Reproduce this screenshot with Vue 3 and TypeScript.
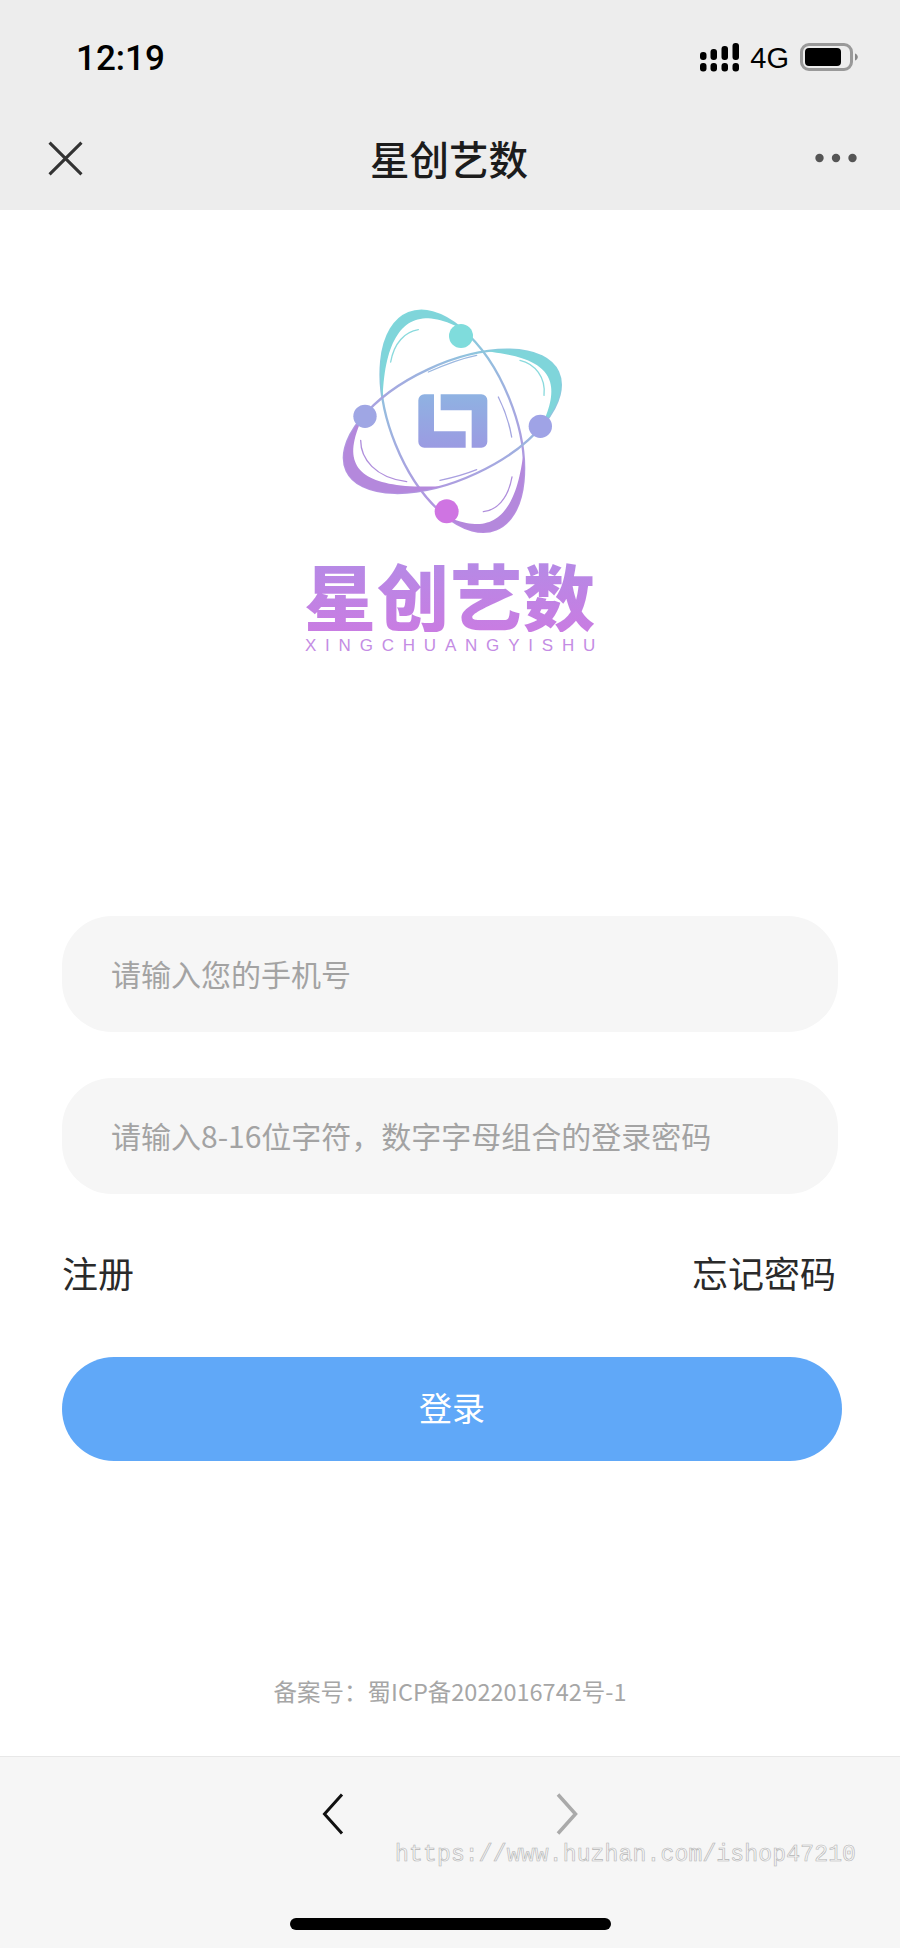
<script setup lang="ts">
const signalBars = [
  { x: 698, y: 52, h: 8 },
  { x: 708.5, y: 49, h: 11 },
  { x: 719.5, y: 46, h: 14 },
  { x: 730.5, y: 43, h: 17 },
];

// tapered band along an orbit, outer edge on the ellipse, angles in degrees
function crescent(rx: number, ry: number, from: number, to: number, thick: number) {
  const outer: string[] = [];
  const inner: string[] = [];
  const steps = 40;
  for (let i = 0; i <= steps; i++) {
    const p = i / steps;
    const t = ((from + (to - from) * p) * Math.PI) / 180;
    const d = thick * Math.pow(Math.sin(Math.PI * p), 0.8);
    outer.push(`${(rx * Math.cos(t)).toFixed(1)} ${(ry * Math.sin(t)).toFixed(1)}`);
    inner.unshift(`${((rx - d) * Math.cos(t)).toFixed(1)} ${((ry - d) * Math.sin(t)).toFixed(1)}`);
  }
  return `M${outer.join('L')}L${inner.join('L')}Z`;
}

const tealTop = crescent(184, 350, -45, -155, 28);
const purpleBottom = crescent(184, 350, 132, 30, 30);
const tealRight = crescent(350, 172, -58, 47, 34);
const purpleLeft = crescent(350, 172, 227, 109, 36);
</script>

<template>
  <div class="page">
    <header class="top">
      <div class="status">
        <span class="time">12:19</span>
        <div class="status-right">
          <svg class="signal" width="40" height="29" viewBox="697 43 40 29">
            <g v-for="b in signalBars" :key="b.x">
              <rect :x="b.x" :y="b.y" width="6.5" :height="b.h" rx="3" fill="#000" />
              <rect :x="b.x" y="63" width="6.5" height="8.5" rx="3" fill="#000" />
            </g>
          </svg>
          <span class="net">4G</span>
          <svg class="battery" width="58" height="28" viewBox="0 0 58 28">
            <rect x="1.5" y="1.5" width="50" height="25" rx="7.5" fill="none" stroke="#999" stroke-width="3" />
            <rect x="5" y="5" width="36" height="18" rx="4" fill="#000" />
            <path d="M55 10.5c1.8 .6 2.8 2 2.8 3.500s-1 2.900-2.800 3.500z" fill="#888" />
          </svg>
        </div>
      </div>
      <div class="nav">
        <svg class="close" width="35" height="35" viewBox="0 0 34 34">
          <path d="M1.500 1.500L32.500 32.500M32.500 1.500L1.500 32.500" stroke="#333" stroke-width="3" fill="none" />
        </svg>
        <span class="title">星创艺数</span>
        <svg class="more" width="42" height="10" viewBox="0 0 42 10">
          <circle cx="4.500" cy="5" r="4.200" fill="#555" />
          <circle cx="21" cy="5" r="4.200" fill="#555" />
          <circle cx="37.500" cy="5" r="4.200" fill="#555" />
        </svg>
      </div>
    </header>

    <main class="main">
      <div class="logo">
        <svg class="atom" width="320" height="254" viewBox="0 0 960 760">
          <defs>
            <linearGradient id="orbitA" gradientUnits="userSpaceOnUse" x1="0" y1="60" x2="0" y2="700">
              <stop offset="0" stop-color="#7fd8dc" />
              <stop offset="0.55" stop-color="#a3abe0" />
              <stop offset="1" stop-color="#b88ce0" />
            </linearGradient>
            <linearGradient id="orbitB" gradientUnits="userSpaceOnUse" x1="800" y1="200" x2="170" y2="580">
              <stop offset="0" stop-color="#7fd8dc" />
              <stop offset="0.5" stop-color="#a3abe0" />
              <stop offset="1" stop-color="#b88ce0" />
            </linearGradient>
            <linearGradient id="mark" x1="0" y1="0" x2="0" y2="1">
              <stop offset="0" stop-color="#8fb2e2" />
              <stop offset="1" stop-color="#9b9be2" />
            </linearGradient>
          </defs>
          <ellipse cx="487" cy="393" rx="184" ry="350" transform="rotate(-22 487 393)" fill="none" stroke="url(#orbitA)" stroke-width="7" />
          <ellipse cx="487" cy="393" rx="350" ry="172" transform="rotate(-25 487 393)" fill="none" stroke="url(#orbitB)" stroke-width="7" />

          <g transform="translate(487 393) rotate(-22)">
            <path :d="tealTop" fill="#7fd5da" />
            <path :d="purpleBottom" fill="#b488dc" />
          </g>
          <g transform="translate(487 393) rotate(-25)">
            <path :d="tealRight" fill="#7fd5da" />
            <path :d="purpleLeft" fill="#b488dc" />
          </g>

          <g fill="none" stroke-width="4" stroke-linecap="round">
            <path d="M385 118C345 124 312 158 302 215" stroke="#8adadd" />
            <path d="M690 210C735 220 768 262 762 315" stroke="#8adadd" />
            <path d="M415 245C460 225 510 205 560 195" stroke="#9cb8e0" />
            <path d="M625 320C645 360 658 400 665 440" stroke="#a3a6e0" />
            <path d="M212 450C212 505 255 562 350 574" stroke="#b08fdc" />
            <path d="M450 570C490 562 525 552 560 538" stroke="#a9a0e0" />
            <path d="M580 664C618 660 654 628 666 560" stroke="#b08fdc" />
          </g>

          <path d="M385 330a18 18 0 0 1 18-18h29v111h95v49H403a18 18 0 0 1-18-18z" fill="url(#mark)" />
          <path d="M452 312h122a18 18 0 0 1 18 18v124a18 18 0 0 1-18 18h-29V360h-93z" fill="url(#mark)" />

          <circle cx="513" cy="137" r="36" fill="#7fdcdc" />
          <circle cx="225" cy="378" r="35" fill="#9fa6e4" />
          <circle cx="751" cy="408" r="35" fill="#9fa3e6" />
          <circle cx="470" cy="663" r="36" fill="#cf74e2" />
        </svg>
        <div class="brand">星创艺数</div>
        <div class="brand-en">XINGCHUANGYISHU</div>
      </div>

      <form class="form" @submit.prevent>
        <input class="field" type="text" placeholder="请输入您的手机号" />
        <input class="field" type="password" placeholder="请输入8-16位字符，数字字母组合的登录密码" />
        <div class="links">
          <span>注册</span>
          <span>忘记密码</span>
        </div>
        <button class="submit" type="submit">登录</button>
      </form>

      <div class="record">备案号：蜀ICP备2022016742号-1</div>
    </main>

    <footer class="bottom">
      <div class="arrows">
        <svg width="22" height="42" viewBox="0 0 22 42">
          <path d="M20 1.500L2.500 21L20 40.500" fill="none" stroke="#111" stroke-width="3" />
        </svg>
        <svg width="22" height="42" viewBox="0 0 22 42">
          <path d="M2 1.500L19.500 21L2 40.500" fill="none" stroke="#aaa" stroke-width="3.500" />
        </svg>
      </div>
      <div class="home"></div>
      <div class="watermark">https://www.huzhan.com/ishop47210</div>
    </footer>
  </div>
</template>

<style scoped>
.page {
  position: relative;
  width: 900px;
  height: 1948px;
  display: flex;
  flex-direction: column;
  background: #fff;
  overflow: hidden;
  font-family: "Noto Sans CJK SC", "Liberation Sans", sans-serif;
}

.top {
  height: 210px;
  background: #ededed;
}

.status {
  height: 116px;
  display: flex;
  justify-content: space-between;
  padding: 39px 42px 0 76px;
  box-sizing: border-box;
}

.time {
  font-family: Roboto, "Liberation Sans", sans-serif;
  font-size: 35px;
  font-weight: 500;
  line-height: 40px;
  color: #000;
}

.status-right {
  display: flex;
  align-items: flex-start;
  padding-top: 4px;
}

.signal {
  margin-right: 11px;
}

.net {
  font-family: "Liberation Sans", sans-serif;
  font-size: 29px;
  line-height: 30px;
  margin-right: 11px;
  color: #000;
}

.nav {
  height: 84px;
  display: flex;
  align-items: center;
  justify-content: space-between;
  padding: 0 43px 0 48px;
}

.title {
  font-size: 39.5px;
  font-weight: 500;
  color: #1c1c1c;
  line-height: 48px;
}

.main {
  flex: 1;
  display: flex;
  flex-direction: column;
  align-items: center;
  padding-top: 80px;
}

.logo {
  display: flex;
  flex-direction: column;
  align-items: center;
  height: 626px;
}

.atom {
  display: block;
}

.brand {
  margin-top: 12px;
  font-size: 72px;
  line-height: 76px;
  letter-spacing: 1px;
  font-weight: 900;
  background: linear-gradient(180deg, #b48be6, #c97ce2);
  -webkit-background-clip: text;
  background-clip: text;
  color: transparent;
}

.brand-en {
  margin-top: 5px;
  margin-right: -9px;
  font-family: "Liberation Sans", sans-serif;
  font-size: 17px;
  line-height: 18px;
  letter-spacing: 8.8px;
  color: #c48ce4;
}

.form {
  width: 780px;
  align-self: flex-start;
  margin-left: 62px;
  display: flex;
  flex-direction: column;
  align-items: flex-start;
}

.field {
  width: 776px;
  height: 116px;
  box-sizing: border-box;
  margin: 0 0 46px;
  padding: 0 49px 2px;
  border: 0;
  border-radius: 50px;
  background: #f6f6f6;
  font-family: inherit;
  font-size: 30px;
  outline: none;
}

.field::placeholder {
  color: #a3a3a3;
  opacity: 1;
}

.links {
  width: 774px;
  display: flex;
  justify-content: space-between;
  margin-top: 8px;
  font-size: 36px;
  line-height: 48px;
  color: #2a2a2a;
}

.submit {
  width: 780px;
  height: 104px;
  margin-top: 61px;
  padding: 0 0 4px;
  border: 0;
  border-radius: 52px;
  background: #60a8f8;
  color: #fff;
  font-family: inherit;
  font-size: 33px;
}

.record {
  margin-top: 214px;
  font-size: 23.5px;
  line-height: 32px;
  color: #a6a6a6;
}

.bottom {
  height: 192px;
  box-sizing: border-box;
  background: #f6f6f6;
  border-top: 1px solid #e8e8e8;
  display: flex;
  flex-direction: column;
  align-items: center;
}

.arrows {
  width: 256px;
  margin-top: 36px;
  display: flex;
  justify-content: space-between;
}

.home {
  width: 321px;
  height: 12px;
  margin-top: 83px;
  border-radius: 6px;
  background: #000;
}

.watermark {
  position: absolute;
  left: 395px;
  top: 1841px;
  font-family: "Liberation Mono", monospace;
  font-size: 23px;
  line-height: 28px;
  letter-spacing: 0.17px;
  color: #f6f6f6;
  -webkit-text-stroke: 0.6px #b4b4b4;
}
</style>
